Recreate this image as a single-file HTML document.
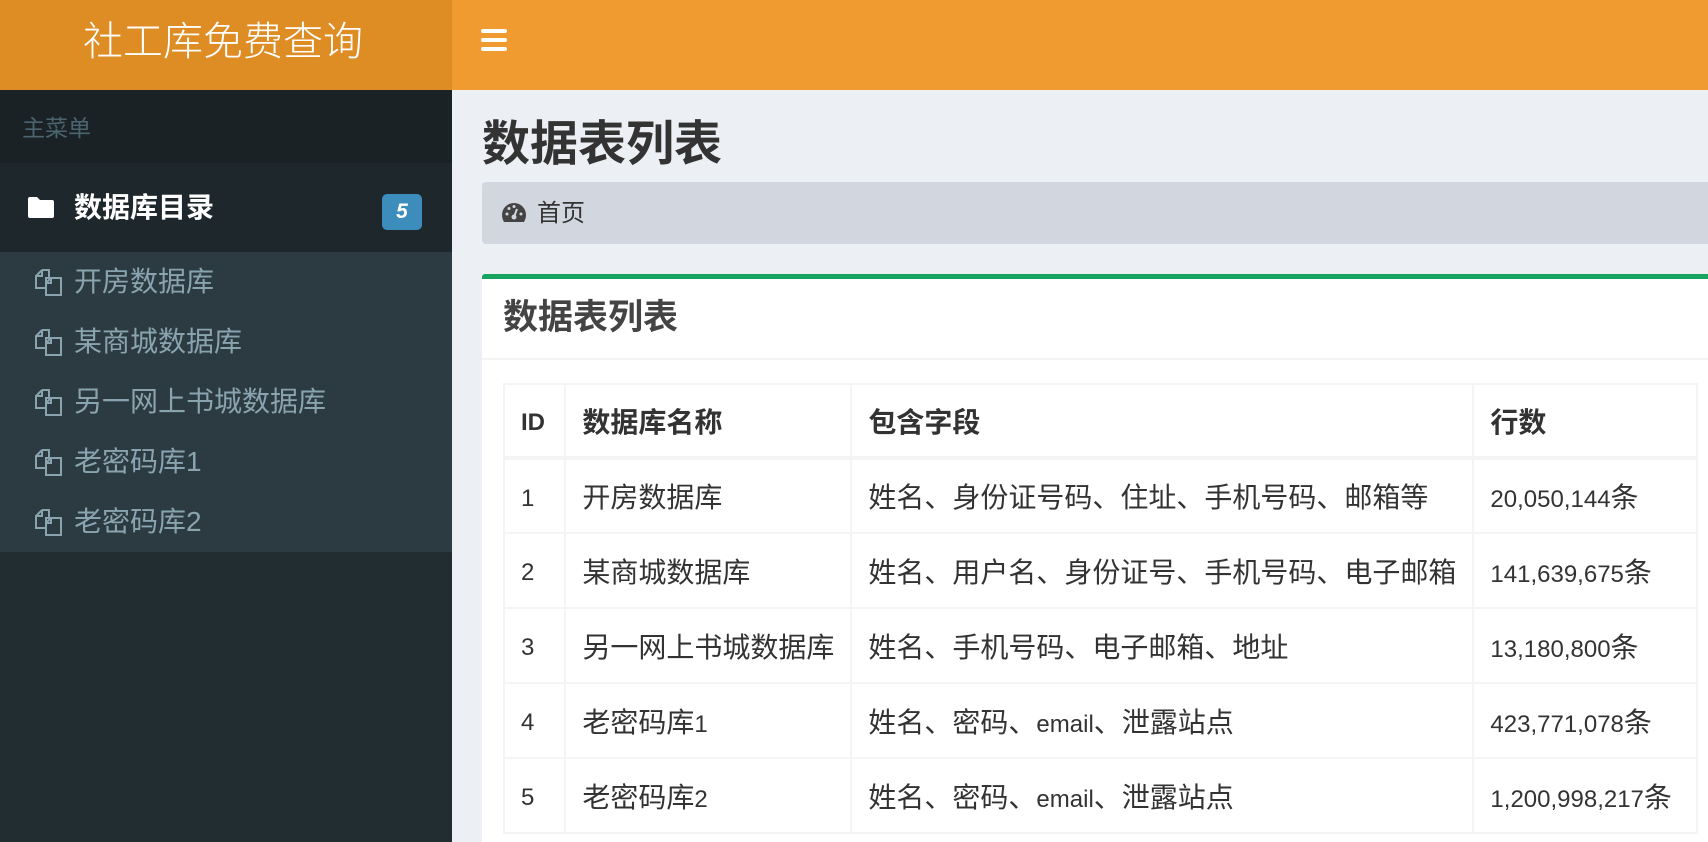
<!DOCTYPE html>
<html><head><meta charset="utf-8"><style>
*{margin:0;padding:0;box-sizing:border-box}
html,body{width:1708px;height:842px;overflow:hidden}
body{background:#ecf0f5;font-family:"Liberation Sans","Noto Sans CJK SC",sans-serif;color:#333;position:relative}
.abs{position:absolute}
.logo{left:0;top:0;width:452px;height:90px;background:#de8c24;color:#fff;font-size:40px;font-weight:300;text-align:center;line-height:84px;padding-right:6px}
.nav{left:452px;top:0;width:1256px;height:90px;background:#f09b2f}
.side{left:0;top:90px;width:452px;height:752px;background:#222d32}
.hdr{left:0;top:90px;width:452px;height:73px;background:#1a2226;color:#4b646f;font-size:23px;line-height:76px;padding-left:22px}
.act{left:0;top:163px;width:452px;height:89px;background:#1e282c;color:#fff;font-weight:bold;font-size:28px;line-height:90px;padding-left:74px}
.badge{left:382px;top:194px;width:40px;height:36px;background:#3c8dbc;border-radius:5px;color:#fff;font-weight:bold;font-style:italic;font-size:21px;text-align:center;line-height:36px}
.sub{left:0;top:252px;width:452px;height:300px;background:#2c3b41}
.si{position:absolute;left:74px;color:#8aa4af;font-size:28px;line-height:30px}
.title{left:482px;top:116px;font-size:48px;font-weight:bold;color:#333;line-height:58px}
.bc{left:482px;top:182px;width:1226px;height:62px;background:#d2d6de;border-radius:4px 0 0 4px;font-size:24px;line-height:64px;padding-left:55px;color:#333}
.box{left:482px;top:274px;width:1226px;height:568px;background:#fff;border-top:5px solid #16a460;border-radius:3px 0 0 0}
.bh{position:absolute;left:0;right:0;top:0;height:81px;border-bottom:2px solid #f4f4f4;font-size:35px;font-weight:bold;line-height:78px;padding-left:21px;color:#444}
table{position:absolute;left:503px;top:383px;width:1195px;border-collapse:collapse;font-size:28px}
td,th{border:2px solid #f4f4f4;text-align:left;padding:0 16px;font-weight:normal;height:75px;white-space:nowrap}
th{font-weight:bold;height:74px;border-bottom:4px solid #f4f4f4}
.n{font-size:24px}
td.n,th.n{padding-top:5px}
</style></head><body>
<div class="abs logo">社工库免费查询</div>
<div class="abs nav"></div>
<svg class="abs" style="left:481px;top:29px" width="26" height="22" viewBox="0 0 26 22"><rect x="0" y="0" width="26" height="4" rx="2" fill="#fff"/><rect x="0" y="9" width="26" height="4" rx="2" fill="#fff"/><rect x="0" y="18" width="26" height="4" rx="2" fill="#fff"/></svg>
<div class="abs side"></div>
<div class="abs hdr">主菜单</div>
<div class="abs act">数据库目录</div>
<svg class="abs" style="left:28px;top:196px" width="26" height="22" viewBox="0 0 26 22"><path d="M0 3a2 2 0 0 1 2-2h7l3 3h12a2 2 0 0 1 2 2v14a2 2 0 0 1-2 2H2a2 2 0 0 1-2-2z" fill="#fff"/></svg>
<div class="abs badge">5</div>
<div class="abs sub">
<div class="si" style="top:15px">开房数据库</div>
<div class="si" style="top:75px">某商城数据库</div>
<div class="si" style="top:135px">另一网上书城数据库</div>
<div class="si" style="top:195px">老密码库1</div>
<div class="si" style="top:255px">老密码库2</div>
</div>
<svg class="abs" style="left:34px;top:269px" width="30" height="270" viewBox="0 0 30 270" fill="none" stroke="#8aa4af" stroke-width="2">
<g><path d="M8 1h7v7M8 1L2 7v12h9M2 7h6V1"/><path d="M12 9h5l-5 5zM17 9h10v17H12V14h5z"/></g>
<g transform="translate(0,60)"><path d="M8 1h7v7M8 1L2 7v12h9M2 7h6V1"/><path d="M12 9h5l-5 5zM17 9h10v17H12V14h5z"/></g>
<g transform="translate(0,120)"><path d="M8 1h7v7M8 1L2 7v12h9M2 7h6V1"/><path d="M12 9h5l-5 5zM17 9h10v17H12V14h5z"/></g>
<g transform="translate(0,180)"><path d="M8 1h7v7M8 1L2 7v12h9M2 7h6V1"/><path d="M12 9h5l-5 5zM17 9h10v17H12V14h5z"/></g>
<g transform="translate(0,240)"><path d="M8 1h7v7M8 1L2 7v12h9M2 7h6V1"/><path d="M12 9h5l-5 5zM17 9h10v17H12V14h5z"/></g>
</svg>
<div class="abs title">数据表列表</div>
<div class="abs bc">首页</div>
<svg class="abs" style="left:502px;top:203px" width="24" height="20" viewBox="0 0 24 20"><path d="M12 0A12 12 0 0 0 0 12c0 3 1 5 2 7h20c1-2 2-4 2-7A12 12 0 0 0 12 0z" fill="#444"/><circle cx="12" cy="14" r="2.5" fill="#d2d6de"/><path d="M12 14l3-8" stroke="#d2d6de" stroke-width="2"/><circle cx="5" cy="11" r="1.5" fill="#d2d6de"/><circle cx="7" cy="5.5" r="1.5" fill="#d2d6de"/><circle cx="12" cy="3.5" r="1.5" fill="#d2d6de"/><circle cx="19" cy="11" r="1.5" fill="#d2d6de"/></svg>
<div class="abs box"><div class="bh">数据表列表</div></div>
<table>
<colgroup><col style="width:62px"><col style="width:286px"><col style="width:622px"><col style="width:225px"></colgroup>
<tr><th class="n">ID</th><th>数据库名称</th><th>包含字段</th><th>行数</th></tr>
<tr><td class="n">1</td><td>开房数据库</td><td>姓名、身份证号码、住址、手机号码、邮箱等</td><td><span class="n">20,050,144</span>条</td></tr>
<tr><td class="n">2</td><td>某商城数据库</td><td>姓名、用户名、身份证号、手机号码、电子邮箱</td><td><span class="n">141,639,675</span>条</td></tr>
<tr><td class="n">3</td><td>另一网上书城数据库</td><td>姓名、手机号码、电子邮箱、地址</td><td><span class="n">13,180,800</span>条</td></tr>
<tr><td class="n">4</td><td>老密码库<span class="n">1</span></td><td>姓名、密码、<span class="n">email</span>、泄露站点</td><td><span class="n">423,771,078</span>条</td></tr>
<tr><td class="n">5</td><td>老密码库<span class="n">2</span></td><td>姓名、密码、<span class="n">email</span>、泄露站点</td><td><span class="n">1,200,998,217</span>条</td></tr>
</table>
</body></html>
